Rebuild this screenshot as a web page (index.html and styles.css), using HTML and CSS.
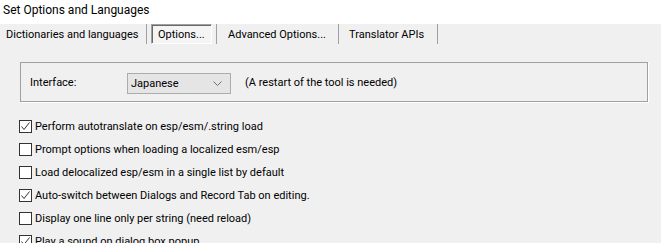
FILE: index.html
```html
<!DOCTYPE html>
<html lang="en">
<head>
    <meta charset="UTF-8">
    <title>Set Options and Languages</title>
    <link rel="stylesheet" href="styles.css">
</head>
<body>
<div class="window">
    <div class="title">Set Options and Languages</div>
    <div class="panel">
        <div class="tabs">
            <div class="tab tab-dict">Dictionaries and languages</div>
            <div class="tab tab-options"><span class="selected">Options...</span></div>
            <div class="tab tab-adv">Advanced Options...</div>
            <div class="tab tab-api">Translator APIs</div>
        </div>

        <div class="group">
            <span class="group-label">Interface:</span>
            <div class="combo">
                <span>Japanese</span>
                <svg class="arrow" width="9" height="5" viewBox="0 0 9 5"><polyline points="0.5,0.5 4.5,4.5 8.5,0.5" fill="none" stroke="#707070" stroke-width="1"/></svg>
            </div>
            <span class="note">(A restart of the tool is needed)</span>
        </div>

        <ul class="checks">
            <li><span class="box"><svg class="tick" width="11" height="11" viewBox="0 0 11 11"><polyline points="1.5,5.5 4,8.5 9.5,1.5" fill="none" stroke="#333" stroke-width="1"/></svg></span>Perform autotranslate on esp/esm/.string load</li>
            <li><span class="box"></span>Prompt options when loading a localized esm/esp</li>
            <li><span class="box"></span>Load delocalized esp/esm in a single list by default</li>
            <li><span class="box"><svg class="tick" width="11" height="11" viewBox="0 0 11 11"><polyline points="1.5,5.5 4,8.5 9.5,1.5" fill="none" stroke="#333" stroke-width="1"/></svg></span>Auto-switch between Dialogs and Record Tab on editing.</li>
            <li><span class="box"></span>Display one line only per string (need reload)</li>
            <li><span class="box"><svg class="tick" width="11" height="11" viewBox="0 0 11 11"><polyline points="1.5,5.5 4,8.5 9.5,1.5" fill="none" stroke="#333" stroke-width="1"/></svg></span>Play a sound on dialog box popup</li>
        </ul>
    </div>
</div>
</body>
</html>
```

FILE: styles.css
```css
body {
    margin: 0;
    padding: 0;
    font-family: Roboto, "Noto Sans", sans-serif;
    font-size: 11px;
    color: #000;
    background: #fff;
    overflow: hidden;
}
.window {
    width: 661px;
    height: 243px;
    overflow: hidden;
}
.title {
    height: 24px;
    padding-left: 3px;
    font-size: 12px;
    line-height: 21px;
    background: #fff;
}
.panel {
    background: #f0f0f0;
    height: 219px;
}
.tabs {
    display: flex;
    height: 20px;
    align-items: stretch;
}
.tab {
    display: flex;
    align-items: center;
    border-right: 1px solid #a0a0a0;
    box-sizing: border-box;
    white-space: nowrap;
}
.tab-dict {
    width: 147px;
    padding-left: 6px;
}
.tab-options {
    width: 70px;
    padding-left: 4px;
}
.tab-adv {
    width: 122px;
    padding-left: 11px;
}
.tab-api {
    width: 99px;
    padding-left: 10px;
}
.selected {
    display: block;
    height: 20px;
    line-height: 19px;
    width: 61px;
    box-sizing: border-box;
    padding-left: 6px;
    border-top: 1px solid #a0a0a0;
    border-left: 1px solid #a0a0a0;
    border-bottom: 1px solid #fff;
    border-right: 1px solid #fff;
    box-shadow: inset 1px 1px 0 #696969;
    background: #f4f4f4;
}
.group {
    margin: 18px 13px 0 20px;
    height: 40px;
    box-sizing: border-box;
    border: 1px solid #a0a0a0;
    box-shadow: 1px 1px 0 #fff;
    display: flex;
    align-items: center;
    padding-left: 9px;
}
.group-label {
    width: 97px;
}
.combo {
    width: 104px;
    height: 21px;
    box-sizing: border-box;
    border: 1px solid #acacac;
    background: #e5e5e5;
    display: flex;
    align-items: center;
    justify-content: space-between;
    padding: 0 8px 0 3px;
    margin-top: 2px;
}
.note {
    margin-left: 14px;
}
.checks {
    list-style: none;
    margin: 13px 0 0 19px;
    padding: 0;
}
.checks li {
    display: flex;
    align-items: center;
    height: 23px;
}
.box {
    width: 13px;
    height: 13px;
    box-sizing: border-box;
    border: 1px solid #333;
    background: #fff;
    margin-right: 3px;
    display: flex;
}
```
